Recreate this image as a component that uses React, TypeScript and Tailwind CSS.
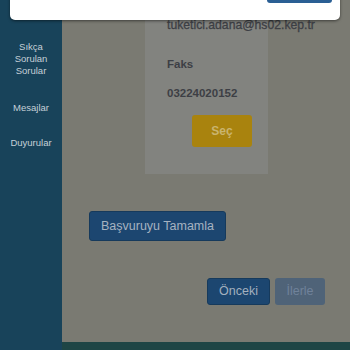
export default function App() {
  return (
    <div
      className="relative flex w-[350px] h-[350px] overflow-hidden"
      style={{ fontFamily: '"Liberation Sans", Arial, sans-serif' }}
    >
      <div className="w-[62px] shrink-0 bg-[#18435a] flex flex-col items-center text-[9.5px] leading-[12px] text-[#c5d0d8]">
        <div className="mt-[41px] text-center">
          Sıkça
          <br />
          Sorulan
          <br />
          Sorular
        </div>
        <div className="mt-[25px]">Mesajlar</div>
        <div className="mt-[23px]">Duyurular</div>
      </div>
      <div className="flex-1 flex flex-col bg-[#7a7a72]">
        <div className="ml-[83px] w-[123px] h-[174px] bg-[#82837f] pl-[22px] pt-[18px] text-[#3d3f45] text-[11.5px] leading-[14px]">
          <div className="text-[12.2px] whitespace-nowrap [-webkit-text-stroke:0.3px_#3d3f45]">tuketici.adana@hs02.kep.tr</div>
          <div className="mt-[25px] font-bold">Faks</div>
          <div className="mt-[15px] font-bold">03224020152</div>
          <div className="mt-[15px] ml-[25px] w-[60px] h-[32px] rounded-[3px] bg-[#a9830e] flex items-center justify-center text-[#c9b46e] font-bold text-[12px]">
            Seç
          </div>
        </div>
        <div className="mt-[37px] ml-[27px] w-[137px] h-[30px] rounded-[3px] bg-[#1c4670] border border-[#163a5c] flex items-center justify-center text-[#a6b3c1] text-[12.5px]">
          Başvuruyu Tamamla
        </div>
        <div className="mt-[37px] flex justify-end pr-[25px] gap-[5px]">
          <div className="w-[63px] h-[27px] rounded-[3px] bg-[#1c4670] border border-[#163a5c] flex items-center justify-center text-[#a3b0be] text-[12.5px]">
            Önceki
          </div>
          <div className="w-[50px] h-[27px] rounded-[3px] bg-[#4f6378] flex items-center justify-center text-[#70829a] text-[12.5px]">
            İlerle
          </div>
        </div>
        <div className="flex-1" />
        <div className="h-[8px] bg-[#1e4545]" />
      </div>
      <div className="absolute left-[10px] top-[-20px] w-[330px] h-[40px] bg-white rounded-b-[5px] shadow-[0_1px_3px_rgba(0,0,0,0.5)]">
        <div className="absolute right-[8px] bottom-[17px] w-[65px] h-[10px] rounded-b-[3px] bg-[#2a5f94]" />
      </div>
    </div>
  );
}
